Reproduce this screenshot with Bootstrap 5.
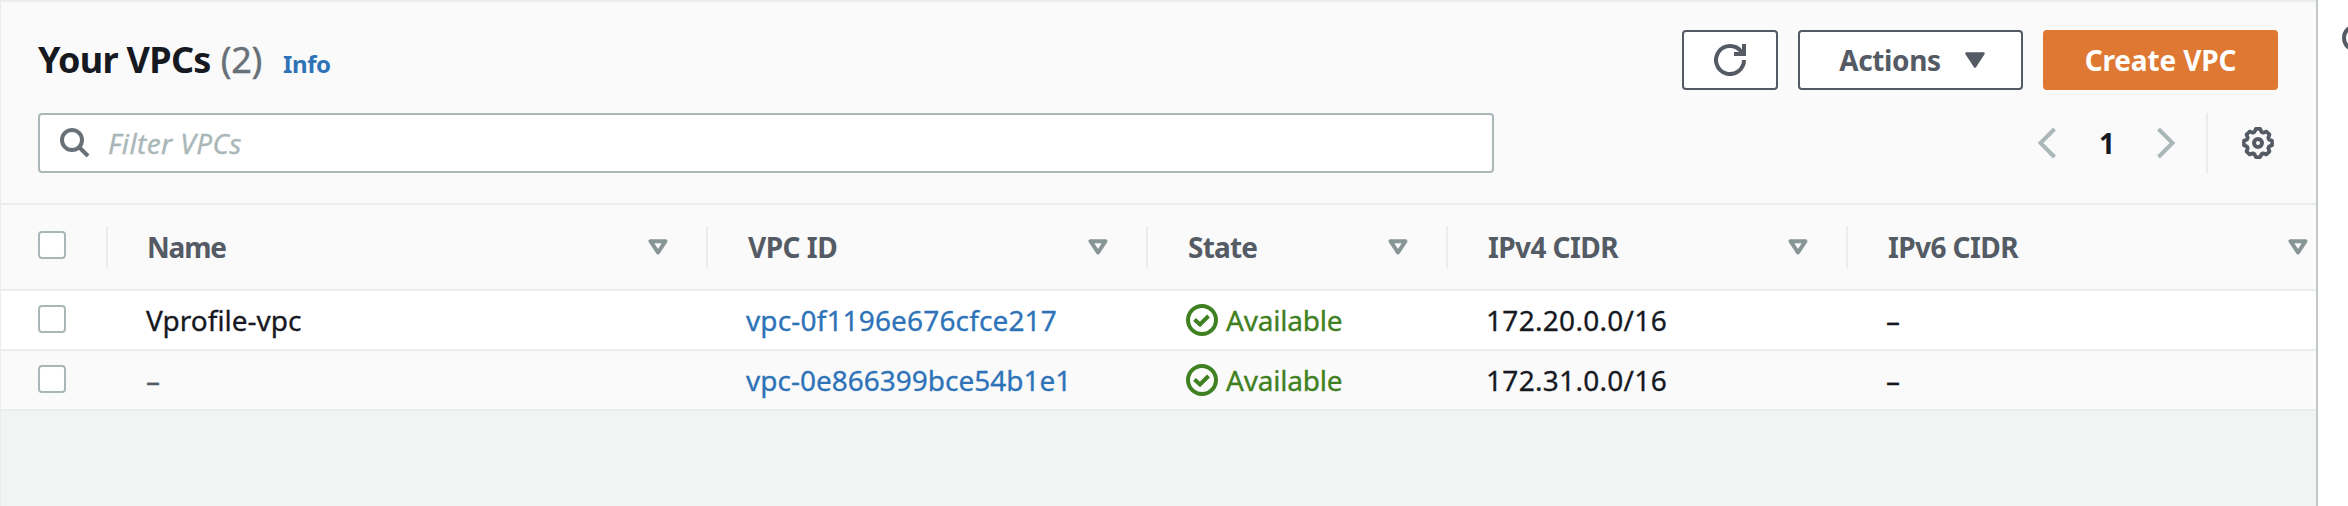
<!DOCTYPE html>
<html lang="en">
<head>
<meta charset="utf-8">
<title>Your VPCs</title>
<link href="https://cdn.jsdelivr.net/npm/bootstrap@5.3.0/dist/css/bootstrap.min.css" rel="stylesheet">
<style>
:root{--slate:#545b64;--line:#eaeded;--muted:#aab7b8}
html,body{height:506px;overflow:hidden}
body{font-family:"Noto Sans","Open Sans",sans-serif;font-size:28px;line-height:1;color:#16191f;background:#fff}
svg{display:block;flex:none}
.vpc-panel{width:2318px;height:506px;background:#f2f3f3;border-left:1px solid var(--line);border-right:2px solid #c3c8ca}
.panel-head{height:205px;background:#fafafa;border-top:2px solid var(--line);border-bottom:2px solid var(--line);padding:28px 38px 0 37px}
.bar{height:60px}
.bar-filter{margin-top:23px;padding-right:4px}
.title-text{font-size:36px;letter-spacing:-.7px;margin:0;line-height:1}
.count-text{font-size:36px;color:#687078;margin-left:10px;letter-spacing:-.3px;-webkit-text-stroke:.4px}
.info-link{font-size:24px;color:#2e73b8;margin-left:21px;letter-spacing:-.4px}
.tool-btn{height:60px;border:2px solid var(--slate);border-radius:4px;background:#fff;color:var(--slate);font-size:28px;line-height:1;padding:0}
.tool-refresh{width:96px}
.tool-actions{width:225px;letter-spacing:-.4px;padding-left:3px}
.tool-create{width:235px;background:#de7833;border-color:#de7833;color:#fff;letter-spacing:-.15px}
.filter-box{width:1456px;height:60px;border:2px solid var(--muted);border-radius:4px;background:#fff;padding-left:20px}
.filter-text{border:0;outline:0;background:none;padding:0;height:56px;width:600px;margin-left:18px;letter-spacing:.4px;-webkit-text-stroke:.3px}
.filter-text::placeholder{color:var(--muted);opacity:1;font-style:italic}
.vsep{width:2px;height:60px;background:var(--line)}
.vpc-table{width:2315px;table-layout:fixed;border-collapse:separate;border-spacing:0}
.vpc-table th,.vpc-table td{padding:0;border-bottom:2px solid var(--line);white-space:nowrap;vertical-align:middle}
.vpc-table th{height:86px;background:#fafafa;color:var(--slate)}
.vpc-table td{height:60px;padding-left:38px;-webkit-text-stroke:.3px}
.row-plain td{background:#fff}
.row-alt td{background:#fafafa}
.vpc-table .pick-cell{padding-left:37px}
.vpc-table .form-check-input{width:28px;height:28px;margin:0;border:2px solid var(--muted);border-radius:4px;float:none;display:block;background-color:#fff}
.vpc-table td .form-check-input{margin-top:-2px}
.head-cell{height:42px;border-right:2px solid var(--line);padding:0 38px 0 38px}
.head-last{border-right:0;padding-right:8px}
.vid{color:#2e73b8}
.ok{color:#3f8021;letter-spacing:-.2px}
.ls-ip{letter-spacing:.3px}
.side-strip{width:30px;height:506px;padding:24px 0 0 24px}
</style>
</head>
<body class="d-flex">
<main class="vpc-panel flex-shrink-0">
  <section class="panel-head">
    <div class="bar d-flex justify-content-between align-items-center">
      <div class="d-flex align-items-baseline">
        <h1 class="fw-bold title-text">Your VPCs</h1><span class="count-text">(2)</span>
        <a href="#" class="fw-bold info-link text-decoration-none">Info</a>
      </div>
      <div class="d-flex" style="gap:20px">
        <button class="btn tool-btn tool-refresh d-flex align-items-center justify-content-center" aria-label="Refresh">
          <svg width="32" height="32" viewBox="0 0 16 16" fill="none" stroke="currentColor" stroke-width="2"><path d="M15 8a7 7 0 1 1-1.4-4.2L15 5.4"/><path d="M10 5h5V0"/></svg>
        </button>
        <button class="btn tool-btn tool-actions fw-bold d-flex align-items-center justify-content-center">Actions
          <svg class="ms-4" width="20" height="16" viewBox="0 0 20 16"><path d="M1.500 1.500h17L10 14.500z" fill="currentColor" stroke="currentColor" stroke-width="2.500" stroke-linejoin="round"/></svg>
        </button>
        <button class="btn tool-btn tool-create fw-bold">Create VPC</button>
      </div>
    </div>
    <div class="bar bar-filter d-flex justify-content-between">
      <div class="filter-box d-flex align-items-center">
        <svg width="30" height="30" viewBox="0 0 30 30" fill="none" stroke="#687078" stroke-width="4"><circle cx="12" cy="12" r="10"/><path d="M19 19l9 9"/></svg>
        <input class="filter-text" type="text" placeholder="Filter VPCs">
      </div>
      <div class="d-flex align-items-center">
        <svg width="20" height="32" viewBox="0 0 20 32" fill="none" stroke="#aab7b8" stroke-width="4"><path d="M17.500 2L3.500 16l14 14"/></svg>
        <span class="fw-bold text-center" style="width:100px">1</span>
        <svg width="20" height="32" viewBox="0 0 20 32" fill="none" stroke="#aab7b8" stroke-width="4"><path d="M1.500 2l14 14-14 14"/></svg>
        <span class="vsep" style="margin:0 34px 0 29px"></span>
        <svg width="32" height="32" viewBox="-16 -16 32 32" fill="none" stroke="#545b64" stroke-linejoin="round"><path id="gear" stroke-width="3.700"/><circle r="4" stroke-width="4"/></svg>
      </div>
    </div>
  </section>
  <table class="vpc-table">
    <colgroup><col style="width:107px"><col style="width:600px"><col style="width:440px"><col style="width:300px"><col style="width:400px"><col style="width:468px"></colgroup>
    <thead><tr id="heads"></tr></thead>
    <tbody id="rows"></tbody>
  </table>
</main>
<aside class="side-strip overflow-hidden flex-shrink-0">
  <svg width="28" height="28" viewBox="0 0 28 28" fill="none" stroke="#545b64" stroke-width="4"><circle cx="14" cy="14" r="12"/></svg>
</aside>
<script src="https://cdn.jsdelivr.net/npm/bootstrap@5.3.0/dist/js/bootstrap.bundle.min.js"></script>
<script>
// eight-toothed settings cog
let d='';
for(let i=0;i<8;i++){
  [[-9,14.200],[9,14.200],[18,11.500],[27,11.500]].forEach(([a,r],k)=>{
    const t=(i*45+a)*Math.PI/180;
    d+=(i||k?'L':'M')+(r*Math.sin(t)).toFixed(2)+' '+(-r*Math.cos(t)).toFixed(2);
  });
}
document.getElementById('gear').setAttribute('d',d+'Z');

const pick='<input class="form-check-input" type="checkbox">';
const sort='<svg width="20" height="16" viewBox="0 0 20 16"><path d="M2.500 2.200h15L10 13.500z" fill="none" stroke="#879596" stroke-width="4" stroke-linejoin="round"/></svg>';
const heads=[['Name',-1.2,1],['VPC ID',-.5,2],['State',-.8,2],['IPv4 CIDR',-.6,2],['IPv6 CIDR',-.6,2]];
document.getElementById('heads').innerHTML='<th><div class="head-cell d-flex" style="padding:5px 0 0 37px">'+pick+'</div></th>'+
  heads.map(([t,ls,x],i)=>`<th><div class="head-cell d-flex align-items-center justify-content-between ${i===4?'head-last':''}"><span style="letter-spacing:${ls}px;margin-left:${x}px">${t}</span>${sort}</div></th>`).join('');
const check='<svg width="32" height="32" viewBox="0 0 32 32" fill="none" stroke="currentColor" stroke-width="4"><circle cx="16" cy="16" r="14"/><path d="M8.500 15.500l5.500 5L22.500 12"/></svg>';
const rows=[['Vprofile-vpc','vpc-0f1196e676cfce217','172.20.0.0/16',.15],['<span style="color:#545b64">–</span>','vpc-0e866399bce54b1e1','172.31.0.0/16',0]];
document.getElementById('rows').innerHTML=rows.map(([n,id,ip,ls],i)=>`<tr class="${i?'row-alt':'row-plain'}"><td class="pick-cell">${pick}</td><td>${n}</td><td><span class="vid" style="letter-spacing:${ls}px">${id}</span></td><td><div class="ok d-flex align-items-center">${check}<span class="ms-2">Available</span></div></td><td class="ls-ip">${ip}</td><td>–</td></tr>`).join('');
</script>
</body>
</html>
